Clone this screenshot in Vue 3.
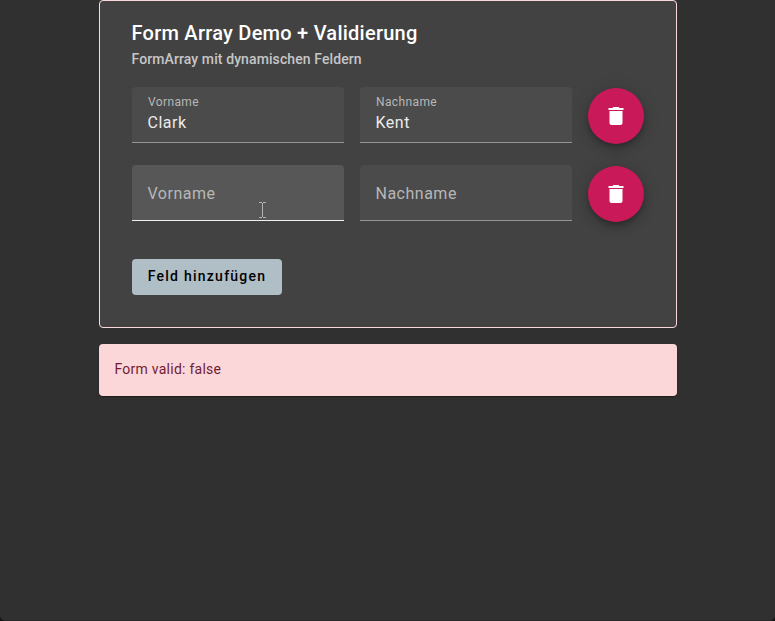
<script setup>
import { ref, computed } from 'vue'

const rows = ref([
  { vorname: 'Clark', nachname: 'Kent', hovered: false },
  { vorname: '', nachname: '', hovered: true },
])
const fields = [
  { key: 'vorname', label: 'Vorname' },
  { key: 'nachname', label: 'Nachname' },
]
const valid = computed(() => rows.value.every((r) => r.vorname && r.nachname))
const add = () => rows.value.push({ vorname: '', nachname: '', hovered: false })
const remove = (i) => rows.value.splice(i, 1)
</script>

<template>
  <main class="page">
    <section class="card">
      <h1 class="title">Form Array Demo + Validierung</h1>
      <h2 class="subtitle">FormArray mit dynamischen Feldern</h2>
      <div class="rows">
        <div v-for="(row, i) in rows" :key="i" class="row">
          <label
            v-for="f in fields"
            :key="f.key"
            class="field"
            :class="{ filled: row[f.key], hovered: row.hovered && f.key === 'vorname' }"
          >
            <span class="label">{{ f.label }}</span>
            <span v-if="row[f.key]" class="value">{{ row[f.key] }}</span>
            <svg v-if="row.hovered && f.key === 'vorname'" class="cursor" width="7" height="16" viewBox="0 0 7 16">
              <path d="M0 .5h3M4 .5h3M3.5 1v14M0 15.5h3M4 15.5h3" fill="none" stroke="#b4b4b4" />
            </svg>
          </label>
          <button class="fab" type="button" aria-label="delete" @click="remove(i)">
            <svg width="24" height="24" viewBox="0 0 24 24" fill="#fff">
              <path d="M5.5 19c0 1.1.9 2 2 2h9c1.1 0 2-.9 2-2V7h-13v12zM19.5 4h-4l-1-1h-5l-1 1h-4v2h15V4z" />
            </svg>
          </button>
        </div>
      </div>
      <button class="add" type="button" @click="add">Feld hinzufügen</button>
    </section>
    <section class="status">Form valid: {{ valid }}</section>
  </main>
</template>

<style>
body {
  background: #111;
}
</style>

<style scoped>
.page {
  box-sizing: border-box;
  height: 621px;
  padding: 0 98.5px;
  background: #303030;
  border-bottom: 1px solid #292929;
  border-radius: 0 0 5px 5px;
  font-family: Roboto, sans-serif;
  color: #fff;
}
.card {
  box-sizing: border-box;
  height: 328px;
  padding: 16px 32px 0;
  background: #424242;
  border: 1px solid #fcd8dc;
  border-radius: 4px;
}
.title {
  margin: 0;
  font-size: 20px;
  line-height: 32px;
  font-weight: 500;
  letter-spacing: 0.25px;
}
.subtitle {
  margin: 0;
  font-size: 14px;
  line-height: 20px;
  font-weight: 500;
  letter-spacing: 0.1px;
  color: #c6c6c6;
}
.rows {
  display: flex;
  flex-direction: column;
  gap: 21px;
  margin-top: 18px;
}
.row {
  display: flex;
  align-items: flex-end;
  gap: 16px;
  height: 57px;
}
.field {
  position: relative;
  box-sizing: border-box;
  width: 212px;
  height: 56px;
  padding: 2px 16px 0;
  align-self: flex-start;
  display: flex;
  flex-direction: column;
  justify-content: center;
  background: #4b4b4b;
  border-bottom: 1px solid #959595;
  border-radius: 4px 4px 0 0;
}
.field.hovered {
  background: #575757;
  border-bottom-color: #f0f0f0;
}
.label {
  font-size: 16px;
  line-height: 24px;
  letter-spacing: 0.5px;
  color: #b7b7b7;
}
.filled {
  justify-content: flex-start;
  padding-top: 7px;
}
.filled .label {
  padding-left: 0.5px;
  font-size: 12px;
  line-height: 16px;
  letter-spacing: 0.375px;
}
.value {
  margin-top: 1px;
  font-size: 16px;
  line-height: 24px;
  letter-spacing: 0.5px;
  color: #ececec;
}
.cursor {
  position: absolute;
  left: 127.5px;
  top: 37px;
}
.fab {
  flex: none;
  width: 56px;
  height: 56px;
  padding: 0;
  display: flex;
  align-items: center;
  justify-content: center;
  border: 0;
  border-radius: 50%;
  background: #c91958;
  box-shadow: 0 3px 5px -1px rgba(0, 0, 0, 0.2), 0 6px 10px rgba(0, 0, 0, 0.14), 0 1px 18px rgba(0, 0, 0, 0.12);
}
.add {
  display: block;
  width: 150px;
  height: 36px;
  margin-top: 37px;
  padding: 0 0 2px 1px;
  border: 0;
  border-radius: 4px;
  background: #b0bec5;
  color: #000;
  font-family: Roboto, sans-serif;
  font-size: 14px;
  font-weight: 500;
  letter-spacing: 1.25px;
  white-space: nowrap;
}
.status {
  box-sizing: border-box;
  height: 52px;
  margin-top: 16px;
  padding: 15px 16px;
  background: #fbd7da;
  border-radius: 4px;
  color: #721c34;
  font-size: 14px;
  line-height: 20px;
  letter-spacing: 0.25px;
  box-shadow: 0 2px 1px -1px rgba(0, 0, 0, 0.2), 0 1px 1px rgba(0, 0, 0, 0.14), 0 1px 3px rgba(0, 0, 0, 0.12);
}
</style>
